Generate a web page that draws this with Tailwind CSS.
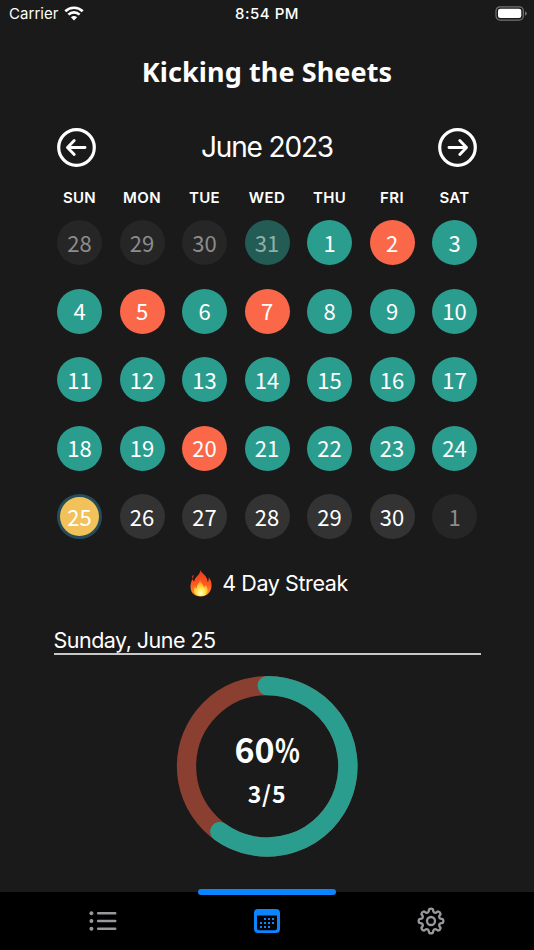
<!DOCTYPE html>
<html lang="en">
<head>
<meta charset="utf-8">
<title>Kicking the Sheets</title>
<script src="https://cdn.jsdelivr.net/npm/@tailwindcss/browser@4"></script>
</head>
<body class="bg-[#1a1a1a]">
<div class="w-[534px] h-[950px] bg-[#1a1a1a] text-white font-[Inter,sans-serif] flex flex-col overflow-hidden">
  <header class="h-7 shrink-0 grid grid-cols-3 items-center px-[9px] text-[15px] leading-7">
    <div class="flex items-center gap-[5px]">
      <span class="tracking-[0.050px]">Carrier</span>
      <svg class="w-5 h-[15px] -mt-[2px]" viewBox="0 0 20 15" fill="none" stroke="#fff"><path d="M1.3 5.2C6.2.6 13.8.6 18.7 5.2" stroke-width="2.7"/><path d="M4.4 8.6c3.2-3 8-3 11.2 0" stroke-width="2.6"/><path d="M10 14.4 6.9 11.3c1.7-1.7 4.5-1.7 6.2 0z" fill="#fff" stroke="none"/></svg>
    </div>
    <span class="text-center font-medium tracking-[0.500px] text-[15px]">8:54 PM</span>
    <svg class="w-[32px] h-[15px] justify-self-end -mr-[2px] -mt-[2px]" viewBox="0 0 32 15" fill="none"><rect x="1" y=".8" width="27.3" height="13.3" rx="4" stroke="#747474" stroke-width="1.2"/><rect x="3" y="2.8" width="23.3" height="9.3" rx="2.3" fill="#fff"/><path d="M30 5.2q1.8.7 1.8 2.3T30 9.8z" fill="#747474"/></svg>
  </header>
  <h1 class="h-[86px] shrink-0 text-center font-bold text-[27px] leading-[87px] tracking-[0.1px] font-['Noto_Sans',sans-serif]">Kicking the Sheets</h1>

  <section class="w-[420px] ml-[57px] shrink-0 pt-[13px]">
    <div class="flex items-center justify-between h-[40px]">
      <svg class="size-[39px]" viewBox="0 0 39 39" fill="none" stroke="#fff" stroke-linecap="round" stroke-linejoin="round"><circle cx="19.5" cy="19.5" r="17.8" stroke-width="3.2"/><path d="M28 19.5H11M17.2 12.5l-6.7 7 6.7 7" stroke-width="2.9"/></svg>
      <h2 class="text-[28px] tracking-[-1.150px]">June 2023</h2>
      <svg class="size-[39px]" viewBox="0 0 39 39" fill="none" stroke="#fff" stroke-linecap="round" stroke-linejoin="round"><circle cx="19.5" cy="19.5" r="17.8" stroke-width="3.2"/><path d="M11 19.5h17M21.8 12.5l6.7 7-6.7 7" stroke-width="2.9"/></svg>
    </div>
    <div class="flex gap-[17.5px] mt-[20px] h-[22px] items-center text-[15px] tracking-[0.350px] font-semibold">
      <span class="w-[45px] flex justify-center">SUN</span><span class="w-[45px] flex justify-center">MON</span><span class="w-[45px] flex justify-center">TUE</span><span class="w-[45px] flex justify-center">WED</span><span class="w-[45px] flex justify-center">THU</span><span class="w-[45px] flex justify-center">FRI</span><span class="w-[45px] flex justify-center">SAT</span>
    </div>
    <div id="days" class="grid grid-cols-7 gap-x-[17.5px] gap-y-[23.5px] mt-[11px] text-[22px] leading-none font-['Noto_Sans_CJK_JP',sans-serif]"></div>
  </section>

  <div class="flex items-center justify-center gap-[9px] mt-[26px] h-[36px] pl-[3px] shrink-0 text-[21.5px] tracking-[-0.400px]">
    <svg class="w-[24px] h-[28px]" viewBox="0 0 24 28">
      <defs><linearGradient id="outer" x1="0" y1="0" x2="0" y2="1"><stop offset="0" stop-color="#e9381b"/><stop offset=".55" stop-color="#ff5a1e"/><stop offset="1" stop-color="#ffa02c"/></linearGradient><radialGradient id="inner" cx=".5" cy=".82" r=".65"><stop offset="0" stop-color="#fffce0"/><stop offset=".35" stop-color="#fff05b"/><stop offset=".75" stop-color="#ffc235"/><stop offset="1" stop-color="#ff812a"/></radialGradient></defs>
      <path d="M11.4.8c.7 4 7.1 5.3 7.2 12.1 1-.8 1.3-2.5 1.1-4.7 2.1 2.4 3.100 5.500 2.800 9-.4 6-4.500 10.200-10.700 10.200C5.600 27.400 1.500 23.600 1.500 17.400c0-2.800.900-4.600 1.700-7.400l2 2.700C5.500 8 11.200 6.500 11.400.8z" fill="url(#outer)"/>
      <path d="M3 8.200q-.2-1.800 1.900-2.300-1 1.900-.6 3.600-1.200-.2-1.300-1.300z" fill="#e9381b"/>
      <path d="M11.200 10c-.2 3.500 3.700 5 3.500 8.400 1.300-.3 1.700-1.600 1.600-2.900 5 6.200 1.600 11.600-4.300 11.600-5.800 0-9-5-6-10.200.3 1.500 1 2.300 2 2.500C7.200 15.500 11 13.600 11.200 10z" fill="url(#inner)"/>
    </svg>
    <span>4 Day Streak</span>
  </div>

  <section class="w-[427px] ml-[53.500px] mt-[23px] shrink-0">
    <h3 class="h-[31px] leading-[33px] text-[21.500px] tracking-[-0.520px] border-b-[2px] border-[#c8c8c8]">Sunday, June 25</h3>
  </section>
  <div class="relative w-[182px] h-[182px] shrink-0 mt-[20px] ml-[176px]">
    <svg class="size-full" viewBox="0 0 182 182" fill="none" stroke-width="19.300"><circle cx="91.200" cy="91.300" r="80.700" stroke="#8a3f31"/><path d="M91.200 10.600A80.700 80.700 0 1 1 43.770 156.590" stroke="#2b9d8f" stroke-linecap="round"/></svg>
    <div class="absolute inset-0 flex flex-col items-center text-center font-bold font-['Noto_Sans_CJK_JP',sans-serif]">
      <span class="mt-[54px] h-[40px] leading-[40px] text-[34px] flex">60<span class="scale-x-[0.760] origin-left -mr-[8px]">%</span></span>
      <span class="mt-[8px] h-[32px] leading-[32px] text-[23px] tracking-[0.900px]">3/5</span>
    </div>
  </div>

  <nav class="relative mt-auto h-[58px] shrink-0 bg-black grid grid-cols-[205px_124px_205px]">
    <div class="absolute left-[198px] -top-[3.500px] w-[138px] h-[6.500px] rounded-full bg-[#0a84ff]"></div>
    <svg class="w-[28px] h-[20px] ml-[89px] mt-[19px]" viewBox="0 0 28 20" stroke="#98989d" fill="#98989d"><path d="M9.200 2.300h17M9.200 10h17M9.200 17.800h17" stroke-width="2.600" stroke-linecap="round"/><g stroke="none"><circle cx="2.400" cy="2.300" r="2"/><circle cx="2.400" cy="10" r="2"/><circle cx="2.400" cy="17.800" r="2"/></g></svg>
    <svg class="w-[26px] h-[24px] ml-[49px] mt-[17px]" viewBox="0 0 26 24" fill="#0a84ff"><path fill-rule="evenodd" d="M4 0h18q4 0 4 4v16q0 4-4 4H4q-4 0-4-4V4q0-4 4-4zM3 7v12.300q0 2 2 2h16q2 0 2-2V7q0-.5-.5-.5h-19Q3 6.500 3 7z"/><path d="M10 9h2v2h-2zm4 0h2v2h-2zm4 0h2v2h-2zM6 13h2v2H6zm4 0h2v2h-2zm4 0h2v2h-2zm4 0h2v2h-2zM6 17h2v2H6zm4 0h2v2h-2zm4 0h2v2h-2z"/></svg>
    <svg class="size-[28px] ml-[88px] mt-[15px]" viewBox="-14 -14 28 28" fill="none" stroke="#98989d" stroke-width="2.300" stroke-linejoin="round"><path id="gear"/><circle r="4"/></svg>
  </nav>
</div>
<script>
const styles = {
  g: "bg-[#2b9d8f]",
  r: "bg-[#fb6849]",
  n: "bg-[#333333]",
  o: "bg-[#262626] text-[#8c8c8c]",
  p: "bg-[#225c55] text-[#91aeaa]",
  t: "bg-[#f2c15a] border-[3px] border-[#264c59]"
};
const kinds = "ooopgrg" + "grgrggg" + "ggggggg" + "ggrgggg" + "tnnnnno";
document.getElementById("days").innerHTML = [...kinds].map((k, i) => {
  const n = i < 4 ? 28 + i : i === 34 ? 1 : i - 3;
  return `<div class="size-[45px] rounded-full flex items-center justify-center ${styles[k]}"><span class="relative -top-[1px]">${n}</span></div>`;
}).join("");

// Eight rounded teeth around the gear's rim
const point = (r, deg) => {
  const a = (deg - 90) * Math.PI / 180;
  return `${(r * Math.cos(a)).toFixed(2)} ${(r * Math.sin(a)).toFixed(2)}`;
};
let outline = "";
for (let i = 0; i < 8; i++) {
  const a = i * 45;
  outline += `${i ? "L" : "M"}${point(9.7, a - 14)}L${point(11.9, a - 9)}Q${point(13, a)} ${point(11.9, a + 9)}L${point(9.7, a + 14)}Q${point(8.4, a + 22.5)} ${point(9.7, a + 31)}`;
}
document.getElementById("gear").setAttribute("d", outline + "Z");
</script>
</body>
</html>
